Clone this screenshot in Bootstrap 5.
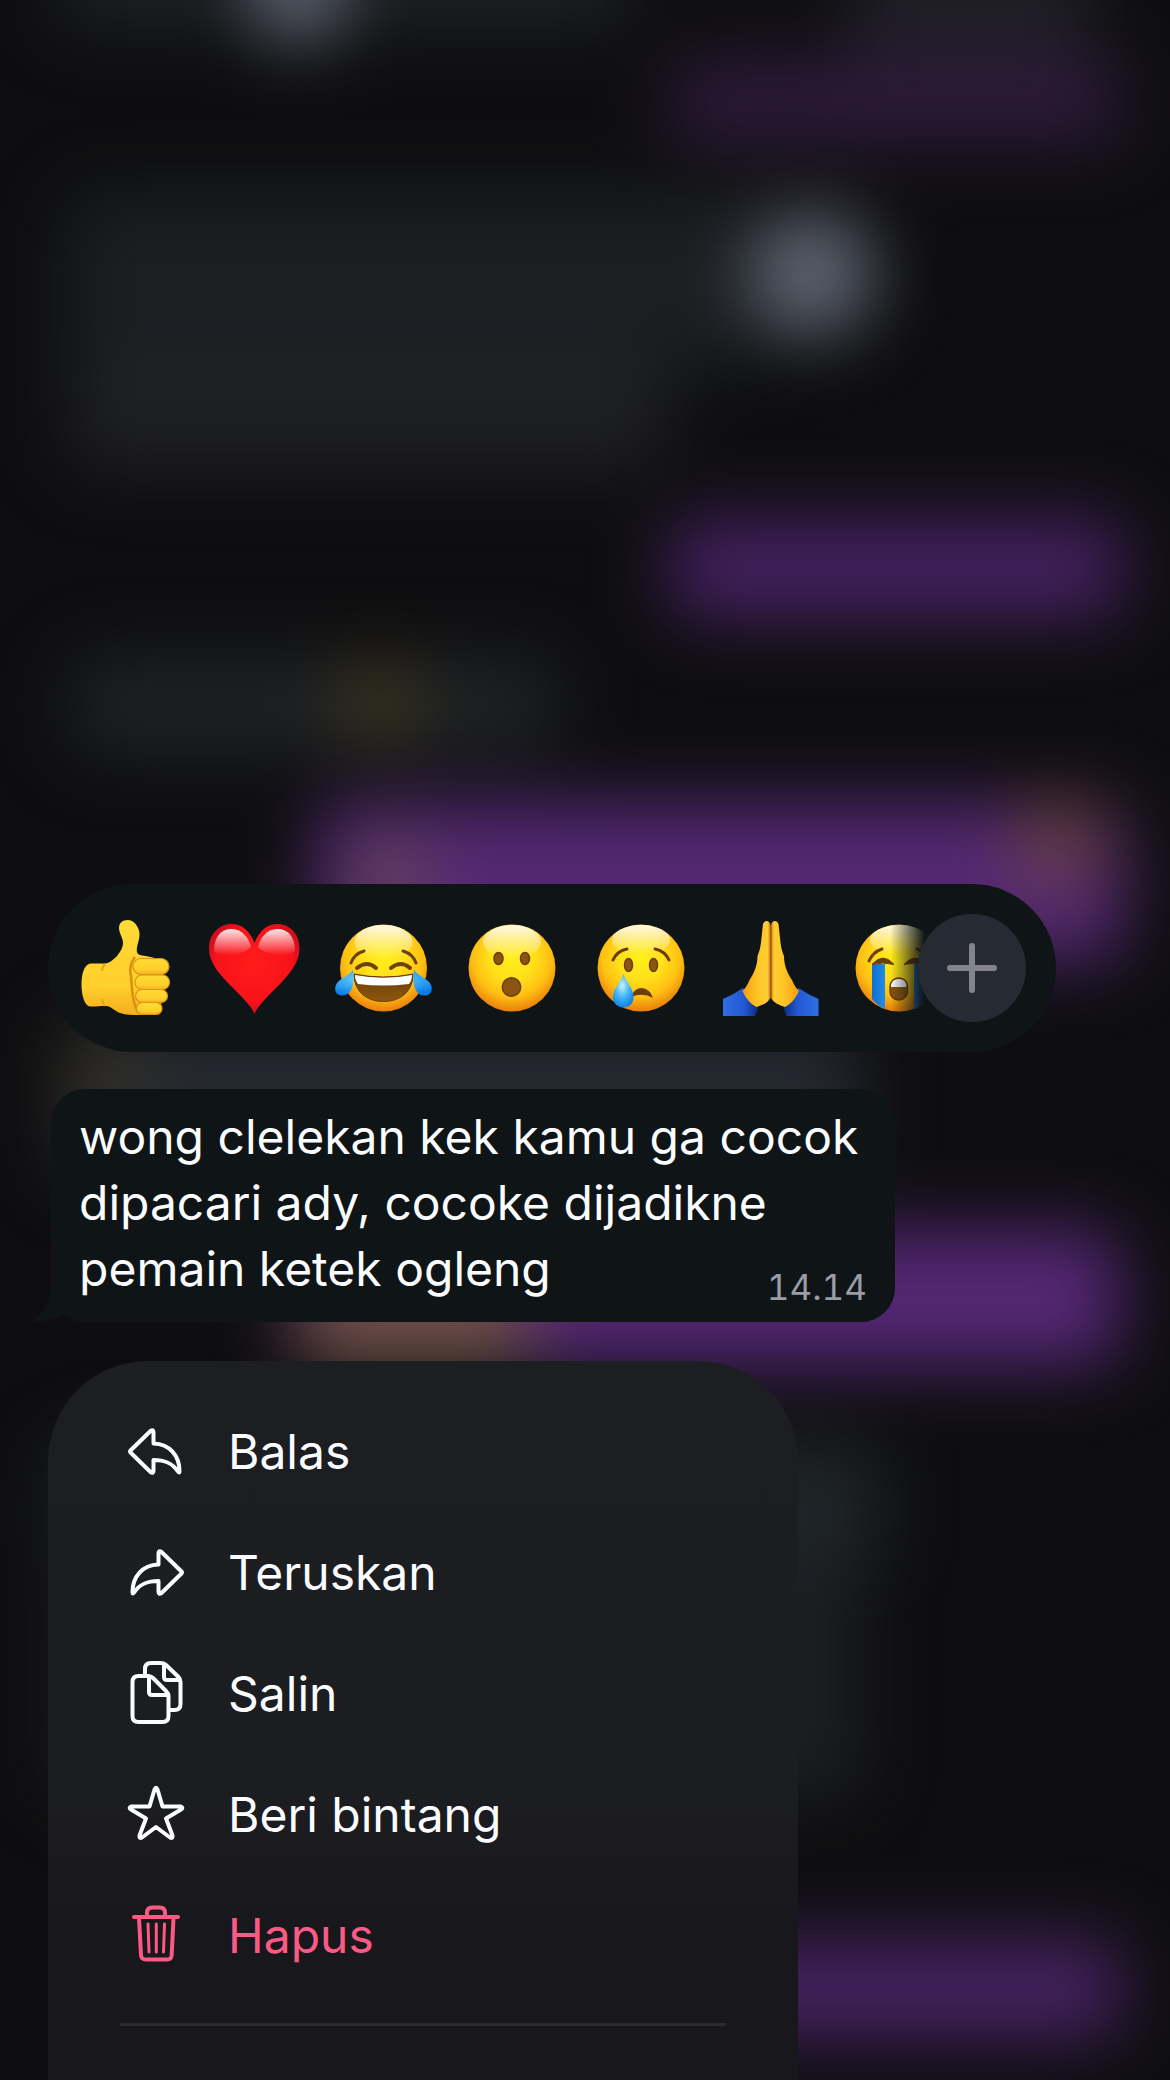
<!DOCTYPE html>
<html lang="id" data-bs-theme="dark">
<head>
<meta charset="utf-8">
<meta name="viewport" content="width=device-width, initial-scale=1">
<title>Pesan</title>
<link rel="stylesheet" href="https://cdn.jsdelivr.net/npm/bootstrap@5.3.0/dist/css/bootstrap.min.css">
<style>
body{background:#0e0e10;color:#fafcff;font-family:Inter,"Liberation Sans",sans-serif;font-size:48px}
.backdrop{z-index:-1}
.sheet{padding:42.5vh 48px 0}
.reactions{width:max-content;padding:30px;border-radius:84px;background:#0f1516}
.strip{gap:33px}
.react{width:96px;height:96px;padding:0;border:0;background:none}
.react svg{display:block;width:96px;height:96px;overflow:visible}
.react-last{-webkit-mask-image:linear-gradient(to right,#000 40%,transparent 76%);mask-image:linear-gradient(to right,#000 40%,transparent 76%)}
.add-btn{width:108px;height:108px;margin-left:-30px;padding:0;border:0;background:#262a33;color:#83848f;z-index:1}
.bubble{width:844px;max-width:100%;margin:37px 0 39px 3px;padding:15px 28px 17px;border-radius:34px;background:#0f1516}
.tail{left:-19px;bottom:0;width:60px;height:60px}
.msg{line-height:66px}
.stamp{margin-top:33px;font-size:35px;line-height:36px;color:#9a9ca6;font-variant-numeric:tabular-nums}
.actions{width:750px;max-width:100%;padding-top:30px;border-radius:100px 100px 0 0;background:linear-gradient(#1d1e22,#1c1d21 60%,#18171c 80%)}
.act{height:121px;gap:42px;padding:0 78px;border:0;background:none;color:inherit;text-align:left}
.act svg{width:60px;height:70px;flex:none;fill:none;stroke:currentColor;stroke-width:4;stroke-linejoin:round;stroke-linecap:round}
.act-delete{color:#fb5a85}
.rule{height:3px;margin:27px 72px 0;background:#2a2a2f;opacity:1;border:0}
</style>
</head>
<body class="position-relative overflow-x-hidden">
<!-- blurred conversation behind the menu -->
<svg class="backdrop position-absolute top-0 start-0 w-100 h-100" viewBox="0 0 1170 2080" preserveAspectRatio="none" aria-hidden="true">
<defs><filter id="soft" x="-50%" y="-50%" width="200%" height="200%" filterUnits="objectBoundingBox" color-interpolation-filters="sRGB"><feGaussianBlur stdDeviation="35"/></filter></defs>
<rect width="1170" height="2080" fill="#0e0e10"/>
<g filter="url(#soft)">
<rect x="60" y="-60" width="570" height="85" fill="#1e2125"/>
<rect x="850" y="-60" width="240" height="115" fill="#1f1f26"/>
<ellipse cx="298" cy="-14" rx="50" ry="58" fill="#626876"/>
<rect x="668" y="58" width="456" height="86" rx="30" fill="#2e1a3a"/>
<rect x="68" y="195" width="700" height="170" rx="30" fill="#1b1f22"/>
<rect x="68" y="345" width="600" height="124" rx="30" fill="#1f2024"/>
<circle cx="812" cy="274" r="64" fill="#5f6572"/>
<rect x="668" y="518" width="456" height="102" rx="30" fill="#44205f"/>
<rect x="70" y="656" width="490" height="98" rx="30" fill="#1e2125"/>
<circle cx="380" cy="702" r="44" fill="#3c351f"/>
<rect x="315" y="802" width="810" height="160" rx="30" fill="#542873"/>
<circle cx="392" cy="880" r="40" fill="#664755"/>
<circle cx="1058" cy="842" r="46" fill="#683f44"/>
<rect x="60" y="1020" width="800" height="160" rx="30" fill="#252930"/>
<circle cx="105" cy="1078" r="40" fill="#383324"/>
<rect x="290" y="1230" width="830" height="136" rx="30" fill="#552775"/>
<rect x="300" y="1268" width="230" height="98" rx="30" fill="#725249"/>
<rect x="60" y="1440" width="820" height="130" rx="30" fill="#1f2528"/>
<rect x="60" y="1560" width="800" height="240" rx="30" fill="#1c1e22"/>
<rect x="650" y="1938" width="472" height="102" rx="30" fill="#462260"/>
</g>
</svg>

<main class="sheet min-vh-100 d-flex flex-column align-items-start">
<svg width="0" height="0" class="position-absolute" aria-hidden="true"><defs>
<radialGradient id="face" cx=".5" cy=".38" r=".64"><stop offset="0" stop-color="#fff01a"/><stop offset=".4" stop-color="#ffe01a"/><stop offset=".7" stop-color="#ffc012"/><stop offset="1" stop-color="#e8760c"/></radialGradient>
<linearGradient id="shine" x1="0" y1="0" x2="0" y2="1"><stop offset="0" stop-color="#fff" stop-opacity=".9"/><stop offset="1" stop-color="#fff" stop-opacity="0"/></linearGradient>
<linearGradient id="brown" x1="0" y1="0" x2="0" y2="1"><stop offset="0" stop-color="#6b3d05"/><stop offset="1" stop-color="#8c5710"/></linearGradient>
<radialGradient id="drop" cx=".45" cy=".35" r=".7"><stop offset="0" stop-color="#c9f2ff"/><stop offset=".5" stop-color="#43b6fa"/><stop offset="1" stop-color="#087be6"/></radialGradient>
<linearGradient id="stream"><stop offset="0" stop-color="#0f6fd2"/><stop offset=".5" stop-color="#35adfb"/><stop offset="1" stop-color="#1370d4"/></linearGradient>
<linearGradient id="skin" x1="0" y1="0" x2="0" y2="1"><stop offset="0" stop-color="#ffdb35"/><stop offset=".7" stop-color="#ffcf2c"/><stop offset="1" stop-color="#f5ae1c"/></linearGradient>
<radialGradient id="red" cx=".5" cy=".45" r=".6"><stop offset="0" stop-color="#ff1d1a"/><stop offset=".7" stop-color="#f8121b"/><stop offset="1" stop-color="#bf0d1e"/></radialGradient>
<linearGradient id="handL"><stop offset="0" stop-color="#f59d10"/><stop offset=".55" stop-color="#ffc526"/><stop offset=".9" stop-color="#ffcd33"/><stop offset="1" stop-color="#c56e0b"/></linearGradient>
<linearGradient id="sleeve"><stop offset="0" stop-color="#2f6fe6"/><stop offset=".6" stop-color="#2458d2"/><stop offset="1" stop-color="#0d2a80"/></linearGradient>
</defs></svg>

<section class="reactions d-flex align-items-center" aria-label="Reaksi">
<div class="strip d-flex">
<button type="button" class="react" aria-label="Jempol"><svg viewBox="0 0 96 96">
<path d="M50 0C44 0 41 3 41 8c0 5 4 10 4 15 0 5-3 9-6 13-3 3-7 7-12 7.500H12C6 45 3.500 54 3.500 65S7 86 12 86.500c6 .5 11-1 17-.5 5 1 8 5 13 7 6 2 12 2 20 2l20-2c3-18 4-38 0-53-7-3-15-4-20-5-5-1-3-8-2-12 2-7 2-11 0-15-2-5-6-8-10-8Z" fill="url(#skin)"/>
<path d="M57 37c-4 5-6 11-4 19 1 12 1 26 7 36" fill="none" stroke="#d98f12" stroke-width="2.500"/>
<path d="M27 44c-3 3-3 5-3 7M27 86c-2-3-3-5-3-7" fill="none" stroke="#e5a41c" stroke-width="2"/>
<g fill="url(#skin)" stroke="#dc9414" stroke-width="1.200"><rect x="55" y="38.500" width="36" height="16" rx="8"/><rect x="57" y="55" width="34.500" height="14.500" rx="7"/><rect x="57.500" y="69.500" width="32" height="13" rx="6.500"/><rect x="58.500" y="82.500" width="25.500" height="12" rx="6"/></g>
</svg></button>
<button type="button" class="react" aria-label="Hati"><svg viewBox="0 0 96 96">
<path d="M47.500 94C44 85 33 75 21 63 9 50 2 41 2 28 2 14 12 4 24.500 4 35 4 43 11 47.500 23 52 11 60 4 70.500 4 83 4 92.500 14 92.500 28c0 13-7 22-18.500 35C62 75 51 85 47.500 94Z" fill="url(#red)"/>
<path d="M7 31C7 17 14 9 24.500 9S42 18 44 27c-8 8-28 12-37 4Z" fill="url(#shine)"/><path d="M51 27C53 18 60 9 70.500 9S88 17 88 31c-9 8-29 4-37-4Z" fill="url(#shine)"/>
</svg></button>
<button type="button" class="react" aria-label="Tertawa"><svg viewBox="0 0 96 96">
<circle cx="47.500" cy="48" r="43.500" fill="url(#face)"/><ellipse cx="47.500" cy="22" rx="29" ry="17" fill="url(#shine)"/>
<g fill="none" stroke="#70400a" stroke-linecap="round" stroke-width="3"><path d="M15 43q3-9 13-12M80 43q-3-9-13-12"/><path d="M21 48q10-8 19 0M55 48q10-8 19 0" stroke-width="4"/></g>
<path d="M18 54q29.500 6 59 0c0 17-12 27.500-29.500 27.500S18 71 18 54Z" fill="url(#brown)" stroke="#6c3c05"/>
<path d="M19 55q28.500 5.500 57 0c0 4-1 6-3 9q-25.500 3-51 0c-2-3-3-5-3-9Z" fill="#fff"/>
<path d="M17 50C19 61 17 75 7 75.500-2 76-3 66 3 61c5-4 10-6 14-11ZM78 50C76 61 78 75 88 75.500 97 76 98 66 92 61c-5-4-10-6-14-11Z" fill="url(#drop)"/>
</svg></button>
<button type="button" class="react" aria-label="Terkejut"><svg viewBox="0 0 96 96">
<circle cx="47" cy="48" r="43.500" fill="url(#face)"/><ellipse cx="47" cy="22" rx="29" ry="17" fill="url(#shine)"/>
<g fill="#8a5510" stroke="#6c3d06" stroke-width="1.500"><ellipse cx="33.500" cy="38.500" rx="4.500" ry="6"/><ellipse cx="60" cy="38.500" rx="4.500" ry="6"/><circle cx="46.500" cy="67" r="9.200"/></g>
</svg></button>
<button type="button" class="react" aria-label="Sedih"><svg viewBox="0 0 96 96">
<circle cx="47" cy="48" r="43.500" fill="url(#face)"/><ellipse cx="47" cy="20" rx="29" ry="15" fill="url(#shine)"/>
<g fill="#8a5510" stroke="#6c3d06" stroke-width="1.500"><ellipse cx="34.500" cy="45" rx="4" ry="6.500"/><ellipse cx="59.500" cy="45" rx="4" ry="6.500"/></g>
<g fill="none" stroke="#6c3d06" stroke-width="3" stroke-linecap="round"><path d="M19 40q4-9 14-11M75 40q-4-9-14-11"/></g>
<path d="M37 77q3-9 11-9 8 1 11 10-10-6-22-1Z" fill="#6c3d06"/>
<path d="M29.500 54c3 9 10 14 10 23 0 7-5 10.500-10 10.500S19 84 19 77c0-9 7.500-14 10.500-23Z" fill="url(#drop)"/>
</svg></button>
<button type="button" class="react" aria-label="Terima kasih"><svg viewBox="0 0 96 96">
<g id="praying"><path d="M0 79q10-4 20-11l15 19q-1 5-3 9H0Z" fill="url(#sleeve)"/>
<path d="M47.500 5c-1-5-6-5-7.500-1L38.500 18c-1 10-2 13-4 18 0 10-4 18-8 24-2 5-4 8-7 11 3 7 8 13 14 16 6-2 11-4 14-9Z" fill="url(#handL)"/></g>
<use href="#praying" transform="matrix(-1 0 0 1 95.500 0)"/>
<path d="M47.800 6v72" stroke="#a75d0b" stroke-width="1.500"/>
</svg></button>
<button type="button" class="react react-last" aria-label="Menangis"><svg viewBox="0 0 96 96">
<circle cx="47" cy="48" r="43.500" fill="url(#face)"/><ellipse cx="47" cy="20" rx="29" ry="15" fill="url(#shine)"/>
<path d="M20 44h13v45q-7-3-13-10ZM62 44h13v35q-6 7-13 10Z" fill="url(#stream)"/>
<path d="M20 44.500q11-13 22 0-11-3-22 0ZM52 44.500q11-13 22 0-11-3-22 0Z" fill="#70400a" stroke="#70400a"/>
<path d="M17 41q4-9 13-12M78 41q-4-9-13-12" fill="none" stroke="#70400a" stroke-width="3" stroke-linecap="round"/>
<rect x="38" y="58" width="17.500" height="22" rx="8.500" fill="#8a5510" stroke="#6c3d06" stroke-width="1.500"/><path d="M39 67q0-8 7.800-8t7.700 8Z" fill="#fff"/>
</svg></button>
</div>
<button type="button" class="add-btn rounded-circle position-relative d-flex align-items-center justify-content-center" aria-label="Tambah reaksi">
<svg width="52" height="52" viewBox="0 0 52 52" fill="none" stroke="currentColor" stroke-width="6" stroke-linecap="round"><path d="M26 4v44M4 26h44"/></svg>
</button>
</section>

<article class="bubble position-relative">
<svg class="tail position-absolute" viewBox="0 0 60 60" aria-hidden="true"><path d="M19 0v26C18 42 12 50 1 59c12 1 22-2 30-7q8 7 20 8L60 20Z" fill="#0f1516"/></svg>
<p class="msg position-relative mb-0">wong clelekan kek kamu ga cocok dipacari ady, cocoke dijadikne pemain ketek ogleng <time class="stamp float-end" datetime="14:14">14.14</time></p>
</article>

<nav class="actions flex-grow-1 d-flex flex-column" aria-label="Menu pesan">
<button type="button" class="act d-flex align-items-center"><svg viewBox="0 0 60 70"><path d="M4.500 35.500Q3.500 34.500 4.500 33.500L24.500 14Q27.500 12 27.500 15.500V26.500C44 27 53.500 39 53.500 54Q53.500 57 51.500 54C46 46 39 43 27.500 43V53.500Q27.500 57 24.500 55Z"/></svg><span>Balas</span></button>
<button type="button" class="act d-flex align-items-center"><svg viewBox="0 0 60 70"><path d="M55.500 35.500Q56.500 34.500 55.500 33.500L35.500 14Q32.500 12 32.500 15.500V26.500C16 27 6.500 39 6.500 54Q6.500 57 8.500 54C14 46 21 43 32.500 43V53.500Q32.500 57 35.500 55Z"/></svg><span>Teruskan</span></button>
<button type="button" class="act d-flex align-items-center"><svg viewBox="0 0 60 70"><path d="M12.500 17H22q3 0 5 2L40 32q2.500 2.500 2.500 5V57q0 6-6 6H12.500q-6 0-6-6V23q0-6 6-6ZM23 17V33q0 3 3 3H42M19 15V10q0-6 6-6H35q3 0 5 2L52.500 18q2 2 2 5V45q0 6-6 6H45M38 5V18q0 3 3 3H54"/></svg><span>Salin</span></button>
<button type="button" class="act d-flex align-items-center"><svg viewBox="0 0 60 70"><path d="M28.500 9.500Q30 6 31.500 9.500L36.500 26.500H54.500Q58 27.500 55 29.500L40 38.500 46.500 55.500Q47 59 44 57.500L30 47 16 57.500Q13 59 13.500 55.500L20 38.500 5 29.500Q2 27.500 5.500 26.500H23.500Z"/></svg><span>Beri bintang</span></button>
<button type="button" class="act act-delete d-flex align-items-center"><svg viewBox="0 0 60 70"><path d="M8 16H52M21 15V12q0-5.500 5-5.500h8q5 0 5 5.500v3M13 17 15 54q.3 4.500 5 4.500H41q4.500 0 4.700-4.500L47.500 17"/><path d="M22 23l1 28M30.300 23v28M38.500 23l-1 28" stroke-width="3"/></svg><span>Hapus</span></button>
<hr class="rule">
</nav>
</main>
<script src="https://cdn.jsdelivr.net/npm/bootstrap@5.3.0/dist/js/bootstrap.bundle.min.js"></script>
</body>
</html>
